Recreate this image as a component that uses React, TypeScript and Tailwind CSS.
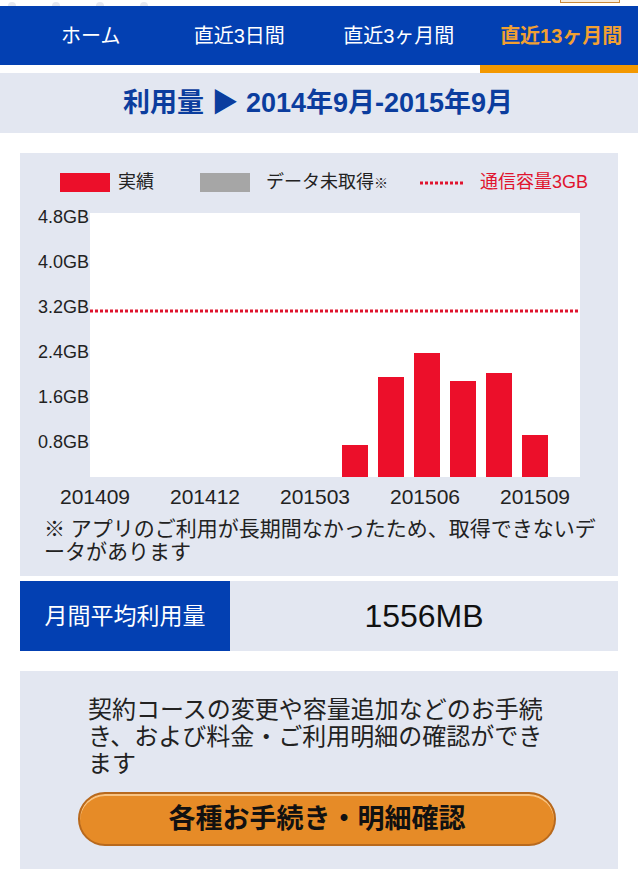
const FONT = { fontFamily: '"Liberation Sans", "Noto Sans CJK JP", sans-serif' };

const tabs = ["ホーム", "直近3日間", "直近3ヶ月間", "直近13ヶ月間"];

// bar heights in px from the plot bottom (plot height 264)
const bars = [0, 0, 0, 0, 0, 0, 0, 32, 100, 124, 96, 104, 42];
const yLabels = ["4.8GB", "4.0GB", "3.2GB", "2.4GB", "1.6GB", "0.8GB"];
const xLabels = ["201409", "201412", "201503", "201506", "201509"];

const Chart = () => (
	<svg width="600" height="312" viewBox="0 0 600 312" className="block">
		<rect x="70" y="14" width="490" height="264" fill="#ffffff" />
		{bars.map((h, i) =>
			h > 0 ? <rect key={i} x={70 + 36 * i} y={278 - h} width="26" height={h} fill="#ec0f2a" /> : null,
		)}
		<line x1="70" y1="112" x2="560" y2="112" stroke="#e0142e" strokeWidth="3" strokeDasharray="3 2" />
		{yLabels.map((t, i) => (
			<text
				key={t}
				x="69"
				y={18 + 45 * i}
				textAnchor="end"
				dominantBaseline="central"
				fontSize="18"
				fill="#222"
				fontFamily='"Liberation Sans", sans-serif'
			>
				{t}
			</text>
		))}
		{xLabels.map((t, i) => (
			<text
				key={t}
				x={75 + 110 * i}
				y="297"
				textAnchor="middle"
				dominantBaseline="central"
				fontSize="21"
				fill="#222"
				fontFamily='"Liberation Sans", sans-serif'
			>
				{t}
			</text>
		))}
	</svg>
);

export default function App() {
	return (
		<div className="w-[638px] h-[869px] overflow-hidden bg-white" style={FONT}>
			{/* top strip */}
			<div className="h-[6px] flex items-end overflow-hidden relative">
				<div className="flex gap-[36px] pl-[8px] -mb-[4px]">
					<div className="w-[8px] h-[8px] rounded-full bg-[#e6e8ee]" />
					<div className="w-[8px] h-[8px] rounded-full bg-[#e6e8ee]" />
					<div className="w-[8px] h-[8px] rounded-full bg-[#e6e8ee]" />
					<div className="w-[8px] h-[8px] rounded-full bg-[#e6e8ee]" />
				</div>
				<div className="absolute right-[18px] top-0 w-[60px] h-[3px] border-x border-b border-[#c98a3a] bg-[#f6ecdc]" />
			</div>

			{/* tabs */}
			<nav className="h-[59px] bg-[#0340b2] grid grid-cols-4 items-center text-[20px]">
				{tabs.map((t, i) => (
					<div
						key={t}
						className={
							i === 3
								? "text-center text-[#f2a032] font-bold pl-[6px]"
								: i === 0
									? "text-center text-white pl-[22px]"
									: "text-center text-white"
						}
					>
						{t}
					</div>
				))}
			</nav>
			<div className="h-[8px] flex justify-end">
				<div className="w-[158px] bg-[#f39800]" />
			</div>

			{/* title band */}
			<div className="h-[60px] bg-[#e3e7f1] flex items-center justify-center">
				<h1 className="text-[27px] font-bold text-[#0b3d9e] pr-[2px]">利用量 ▶ 2014年9月-2015年9月</h1>
			</div>

			{/* chart panel */}
			<section className="mx-[20px] mt-[20px] h-[423px] bg-[#e3e7f1] pt-[20px]">
				<div className="flex items-center h-[19px] text-[18px] text-[#222]">
					<div className="w-[180px] pl-[40px] flex items-center">
						<div className="w-[50px] h-[19px] bg-[#ec0f2a]" />
						<span className="ml-[8px]">実績</span>
					</div>
					<div className="w-[220px] flex items-center">
						<div className="w-[50px] h-[19px] bg-[#a6a6a6]" />
						<span className="ml-[16px]">
							データ未取得<span className="text-[14px]">※</span>
						</span>
					</div>
					<div className="flex items-center">
						<svg width="43" height="4" className="block">
							<line x1="0" y1="2" x2="43" y2="2" stroke="#e0142e" strokeWidth="3" strokeDasharray="3 2" />
						</svg>
						<span className="ml-[17px] text-[#e0142e]">通信容量3GB</span>
					</div>
				</div>
				<div className="mt-[7px]">
					<Chart />
				</div>
				<p className="mt-[6px] pl-[24px] text-[21px] leading-[23px] text-[#222] whitespace-nowrap">
					※ アプリのご利用が長期間なかったため、取得できないデ
					<br />
					ータがあります
				</p>
			</section>

			{/* monthly average */}
			<div className="mx-[20px] mt-[5px] h-[70px] flex">
				<div className="w-[210px] bg-[#0340b2] text-white text-[23px] flex items-center justify-center">
					月間平均利用量
				</div>
				<div className="flex-1 bg-[#e3e7f1] flex items-center justify-center text-[32px] text-[#111]">
					1556MB
				</div>
			</div>

			{/* procedures */}
			<section className="mx-[20px] mt-[20px] h-[220px] bg-[#e3e7f1] pt-[25px]">
				<p className="px-[68px] text-[24px] leading-[27px] text-[#222]">
					契約コースの変更や容量追加などのお手続
					<br />
					き、および料金・ご利用明細の確認ができ
					<br />
					ます
				</p>
				<button className="mt-[15px] mx-[58px] w-[478px] h-[54px] rounded-full bg-[#e68b27] border-2 border-[#b8691d] shadow-[inset_0_2px_0_rgba(255,220,170,0.7)] text-[27px] font-bold text-[#111] flex items-center justify-center">
					各種お手続き・明細確認
				</button>
			</section>
		</div>
	);
}
